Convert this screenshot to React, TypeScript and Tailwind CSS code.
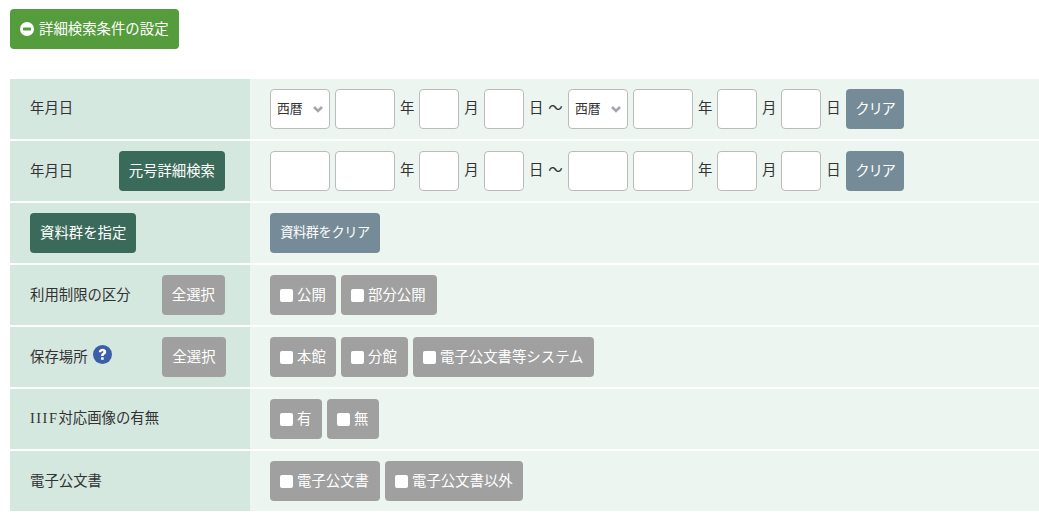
import { ReactNode } from 'react'

const btn = 'inline-flex h-10 items-center justify-center rounded-[4px] px-2.5 text-[14.4px] text-white whitespace-nowrap'

function Row({ label, children }: { label: ReactNode; children: ReactNode }) {
  return (
    <div className="flex h-[60px]">
      <div className="flex w-[240px] shrink-0 items-center justify-between bg-[#d5e8e0] pl-5 pr-[25px]">{label}</div>
      <div className="flex flex-1 items-center gap-[5px] bg-[#edf5f1] pl-5">{children}</div>
    </div>
  )
}

function Era({ select }: { select?: boolean }) {
  if (!select) return <div className="h-10 w-[60px] rounded-[4px] border border-[#bbbbbb] bg-white" />
  return (
    <div className="flex h-10 w-[60px] items-center justify-between rounded-[4px] border border-[#bbbbbb] bg-white pl-[6px] pr-[6px] text-[12.8px] text-[#333333]">
      <span className="pb-[2px]">西暦</span>
      <svg width="10" height="7" viewBox="0 0 10 7" fill="none" stroke="#a5a5ad" strokeWidth="2.6">
        <path d="M1 1l4 4 4-4" />
      </svg>
    </div>
  )
}

function Box({ wide }: { wide?: boolean }) {
  return <div className={wide ? 'h-10 w-[60px] rounded-[4px] border border-[#bbbbbb] bg-white' : 'h-10 w-10 rounded-[4px] border border-[#bbbbbb] bg-white'} />
}

function Side({ select, first }: { select?: boolean; first?: boolean }) {
  return (
    <>
      <Era select={select} />
      <Box wide />
      <span className="w-[14px] pb-1 text-center">年</span>
      <Box />
      <span className={first ? 'w-[15px] pb-1 text-center' : 'w-[14px] pb-1 text-center'}>月</span>
      <Box />
      <span className={first ? 'w-[14px] pb-1 text-center' : 'w-[15px] pb-1 text-center'}>日</span>
    </>
  )
}

function DateRange({ select }: { select?: boolean }) {
  return (
    <>
      <Side select={select} first />
      <span className="w-[15px] pb-1 text-center">〜</span>
      <Side select={select} />
      <div className={`${btn} w-[58px] bg-[#768b98] !px-0`}>
        <span className="pb-[2px] tracking-[-1.2px]">クリア</span>
      </div>
    </>
  )
}

function Check({ text, width }: { text: string; width: string }) {
  return (
    <label className={`${btn} ${width} !justify-start gap-1 bg-[#a0a0a0]`}>
      <span className="h-[13px] w-[13px] rounded-[2px] bg-white" />
      <span className="pb-[2px]">{text}</span>
    </label>
  )
}

function Action({ text, color }: { text: string; color: string }) {
  return (
    <div className={`${btn} ${color}`}>
      <span className="pb-[2px]">{text}</span>
    </div>
  )
}

export default function App() {
  return (
    <div className="h-[522px] bg-white pl-2.5 pt-[9px] text-[14.4px] text-[#333333] [font-family:'Noto_Sans_CJK_JP','Noto_Sans',sans-serif]">
      <button className={`${btn} gap-[5px] bg-[#559c3c]`}>
        <svg width="14" height="14" viewBox="0 0 14 14">
          <circle cx="7" cy="7" r="7" fill="white" />
          <rect x="3" y="5.6" width="8" height="2.8" rx="0.6" fill="#559c3c" />
        </svg>
        <span className="pb-[2px]">詳細検索条件の設定</span>
      </button>

      <div className="mt-[30px] flex flex-col gap-[2px]">
        <Row label={<span className="pb-1">年月日</span>}>
          <DateRange select />
        </Row>
        <Row
          label={
            <>
              <span className="pb-[2px]">年月日</span>
              <Action text="元号詳細検索" color="bg-[#3a6b5a]" />
            </>
          }
        >
          <DateRange />
        </Row>
        <Row label={<Action text="資料群を指定" color="bg-[#3a6b5a]" />}>
          <div className={`${btn} w-[110px] bg-[#768b98] !px-0`}>
            <span className="pb-[2px] text-[13.2px] tracking-[-0.4px]">資料群をクリア</span>
          </div>
        </Row>
        <Row
          label={
            <>
              <span className="pb-[2px]">利用制限の区分</span>
              <Action text="全選択" color="bg-[#a0a0a0]" />
            </>
          }
        >
          <Check text="公開" width="w-[66px]" />
          <Check text="部分公開" width="w-[96px]" />
        </Row>
        <Row
          label={
            <>
              <span className="flex items-center gap-[5px] pb-[2px]">
                保存場所
                <svg width="19" height="19" viewBox="0 0 19 19" className="mb-[3px]">
                  <circle cx="9.5" cy="9.5" r="9.5" fill="#3a5ea8" />
                  <path d="M5.8 7.3c0-2.2 1.6-3.5 3.8-3.5s3.6 1.3 3.6 3.1c0 2.4-2.6 2.5-2.6 4H8.1c0-2.8 2.3-2.8 2.3-3.9 0-.6-.3-1-.9-1-.7 0-1 .5-1.1 1.3z" fill="white" />
                  <rect x="8.1" y="12.2" width="2.6" height="2.6" rx="0.4" fill="white" />
                </svg>
              </span>
              <div className={`${btn} -mr-px w-[64px] bg-[#a0a0a0]`}>
                <span className="pb-[2px]">全選択</span>
              </div>
            </>
          }
        >
          <Check text="本館" width="w-[66px]" />
          <Check text="分館" width="w-[67px]" />
          <Check text="電子公文書等システム" width="w-[181px]" />
        </Row>
        <Row
          label={
            <span className="pb-[2px]">
              <span className="font-['Liberation_Serif'] tracking-[1.5px]">IIIF</span>
              <span>対応画像の有無</span>
            </span>
          }
        >
          <Check text="有" width="w-[52px]" />
          <Check text="無" width="w-[52px]" />
        </Row>
        <Row label={<span className="pb-[2px]">電子公文書</span>}>
          <Check text="電子公文書" width="w-[110px]" />
          <Check text="電子公文書以外" width="w-[138px]" />
        </Row>
      </div>
    </div>
  )
}
